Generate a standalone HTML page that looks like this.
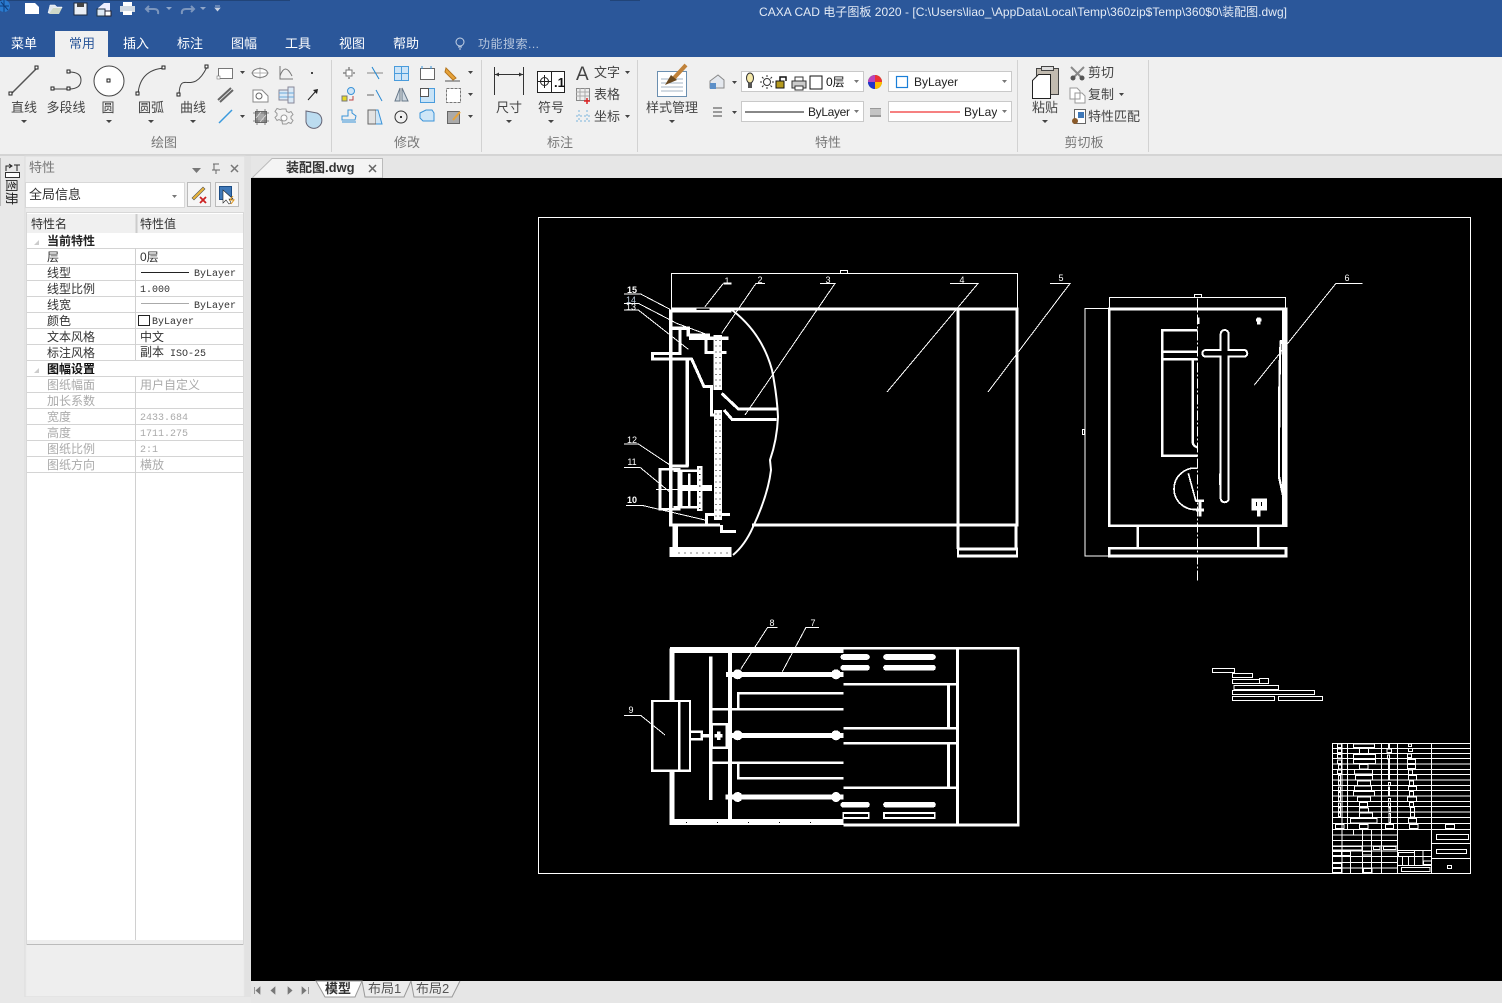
<!DOCTYPE html>
<html><head><meta charset="utf-8"><title>CAXA CAD</title>
<style>
html,body{margin:0;padding:0;background:#e6e6e6;overflow:hidden}
svg{display:block}
text{font-family:"Liberation Sans","Noto Sans CJK SC",sans-serif;font-size:13px;fill:#444}
.tab{fill:#fff;font-size:13px}
.lb{fill:#444;font-size:13px;text-anchor:middle}
.gp{fill:#777;font-size:13px;text-anchor:middle}
.pl{fill:#333;font-size:12px}
.pd{fill:#aaa;font-size:12px}
.mono{font-family:"Liberation Mono","Noto Sans CJK SC",monospace;font-size:10px;fill:#333}
.monod{font-family:"Liberation Mono","Noto Sans CJK SC",monospace;font-size:10px;fill:#aaa}
.n{fill:#fff;font-size:9px;text-anchor:middle}
.i{fill:none;stroke:#555;stroke-width:1}
.b{fill:#cfe6f7;stroke:#3a93d8;stroke-width:1}
.g{fill:#ddd;stroke:#666;stroke-width:1}
.d path,.d rect,.d circle{fill:none;stroke:#fff}
</style></head><body>
<svg width="1502" height="1003" viewBox="0 0 1502 1003" xmlns="http://www.w3.org/2000/svg">
<rect width="1502" height="1003" fill="#e6e6e6"/>
<!-- title -->
<rect width="1502" height="57" fill="#2b579a"/>
<rect x="0" y="0" width="290" height="1" fill="#214478"/><rect x="610" width="30" height="1" fill="#214478"/>
<text x="759" y="16" textLength="528" style="fill:#e4ebf5;font-size:12px">CAXA CAD 电子图板 2020 - [C:\Users\liao_\AppData\Local\Temp\360zip$Temp\360$0\装配图.dwg]</text>
<!-- QAT -->
<circle cx="4" cy="6" r="6" fill="#2a7bd0"/><path d="M0,6H9M4,0V12M1,2L8,10" stroke="#0e3f80"/>
<path d="M25,3H35L39,7V14H25Z" fill="#fff"/>
<path d="M48,13L50,5H55L57,7H62L62,8H53L51,13Z" fill="#dfe6ee" stroke="#fff" stroke-width=".5"/><path d="M49,14L53,8H62L59,14Z" fill="#cfd8c8"/>
<rect x="74" y="3" width="13" height="12" fill="#e9eef5" stroke="#1c2a3f"/><rect x="77" y="3" width="7" height="4" fill="#444"/>
<path d="M98,8L104,3H110V11H98Z" fill="#eef"/><rect x="97" y="9" width="8" height="7" fill="#dce8f5" stroke="#234"/><rect x="105" y="11" width="6" height="5" fill="#fff" stroke="#223"/>
<rect x="123" y="2" width="9" height="4" fill="#fff"/><rect x="120" y="6" width="15" height="6" fill="#cfd8e2"/><rect x="123" y="11" width="9" height="4" fill="#fff"/>
<path d="M149,6L146,9L149,12M147,9H154Q159,9 158,14" fill="none" stroke="#7c96bd" stroke-width="2"/>
<path d="M166,7H172L169,10Z" fill="#8fa6c8"/>
<path d="M191,6L194,9L191,12M193,9H186Q181,9 182,14" fill="none" stroke="#7c96bd" stroke-width="2"/>
<path d="M200,7H206L203,10Z" fill="#8fa6c8"/>
<path d="M215,6H220M215,8H220L217.500,11Z" fill="#c8d2e2" stroke="#c8d2e2" stroke-width=".7"/>
<!-- tabs -->
<rect x="55" y="31" width="53" height="27" fill="#f0f0f0"/>
<text x="11" y="48" class="tab">菜单</text>
<text x="69" y="48" style="fill:#2b579a">常用</text>
<text x="123" y="48" class="tab">插入</text><text x="177" y="48" class="tab">标注</text><text x="231" y="48" class="tab">图幅</text><text x="285" y="48" class="tab">工具</text><text x="339" y="48" class="tab">视图</text><text x="393" y="48" class="tab">帮助</text>
<circle cx="460" cy="42" r="4" fill="none" stroke="#c5d2e5"/><path d="M458,47H462M459,49H461" stroke="#c5d2e5"/>
<text x="478" y="48" textLength="61" style="fill:#b5c5dd;font-size:12px">功能搜索...</text>
<!-- ribbon -->
<rect y="57" width="1502" height="98" fill="#f0f0f0"/>
<rect y="154" width="1502" height="2" fill="#d4d4d4"/>
<path d="M331.500,60V152M481.500,60V152M637.500,60V152M1017.500,60V152M1148.500,60V152" stroke="#d2d2d2"/>
<text x="164" y="147" class="gp">绘图</text><text x="407" y="147" class="gp">修改</text><text x="560" y="147" class="gp">标注</text><text x="828" y="147" class="gp">特性</text><text x="1084" y="147" class="gp">剪切板</text>
<text x="24" y="112" class="lb">直线</text><text x="66" y="112" class="lb">多段线</text><text x="108" y="112" class="lb">圆</text><text x="151" y="112" class="lb">圆弧</text><text x="193" y="112" class="lb">曲线</text>
<text x="509" y="112" class="lb">尺寸</text><text x="551" y="112" class="lb">符号</text><text x="672" y="112" class="lb">样式管理</text><text x="1045" y="112" class="lb">粘贴</text>
<g fill="#444"><path d="M21,120h6l-3,3zM106,120h6l-3,3zM148,120h6l-3,3zM190,120h6l-3,3zM506,120h6l-3,3zM548,120h6l-3,3zM669,120h6l-3,3zM1042,120h6l-3,3z"/>
<path d="M240,71h5l-2.500,3zM240,115h5l-2.500,3zM468,71h5l-2.500,3zM468,93h5l-2.500,3zM468,115h5l-2.500,3zM625,71h5l-2.500,3zM625,115h5l-2.500,3zM732,81h5l-2.500,3zM732,111h5l-2.500,3zM1119,93h5l-2.500,3z"/></g>
<!-- draw big icons -->
<path d="M11,94L37,68" stroke="#555" stroke-width="1.500"/>
<path d="M52,89H69M69,72Q81,72 81,80Q81,89 69,89" fill="none" stroke="#444"/>
<circle cx="109" cy="81" r="15" fill="#fff" stroke="#444"/>
<path d="M138,94Q140,70 164,68" fill="none" stroke="#444"/>
<path d="M179,95C180,68 192,98 207,67" fill="none" stroke="#444"/>
<g fill="#fff" stroke="#222"><rect x="9" y="92" width="3" height="3"/><rect x="35" y="66" width="3" height="3"/><rect x="67" y="70" width="3" height="3"/><rect x="51" y="87" width="3" height="3"/><rect x="67" y="87" width="3" height="3"/><rect x="107" y="79" width="3" height="3"/><rect x="136" y="92" width="3" height="3"/><rect x="162" y="66" width="3" height="3"/><rect x="177" y="93" width="3" height="3"/><rect x="205" y="65" width="3" height="3"/></g>
<!-- draw small -->
<rect x="218.500" y="68.500" width="14" height="10" fill="#fff" stroke="#777"/><rect x="217" y="76" width="3" height="3" fill="#fff" stroke="#777" stroke-width=".6"/>
<ellipse cx="260" cy="73" rx="7.500" ry="4.500" fill="#fff" stroke="#777"/><path d="M260,67V79M251,73H269" stroke="#999" stroke-width=".7"/>
<path d="M280,66V79H293M280,76Q285,62 292,76" fill="none" stroke="#777"/>
<rect x="311" y="72" width="2" height="2" fill="#444"/>
<path d="M218,100L231,88M220,102L233,90" stroke="#666" stroke-width="2"/>
<path d="M253,90H262L268,96V102H253Z" fill="#fff" stroke="#888"/><circle cx="259" cy="96" r="3" fill="none" stroke="#666"/>
<path d="M279,90H288V87H294V103H288V100H279Z" fill="#dbe9f5" stroke="#889"/><path d="M279,93H294M279,97H294" stroke="#6aa9dc"/><path d="M288,87V103" stroke="#889"/>
<path d="M308,100L316,91" stroke="#222"/><path d="M313,90L318,89L317,94Z" fill="#222"/>
<path d="M219,123L232,110" stroke="#3a9ade" stroke-width="1.500"/>
<rect x="255.500" y="111.500" width="11" height="11" fill="#a9a9a9" stroke="#666"/><path d="M253,113H269M253,121H269M257,109V125M265,109V125" stroke="#666" stroke-width=".8"/><path d="M256,118L261,112M260,122L266,115" stroke="#ddd" stroke-width=".8"/>
<path d="M282,109h4l.5,2.500l2.500,1l2,-1l2,3l-2,2v2l2,2l-2,3l-2.500,-1l-2,1.500h-4l-.5,-3l-3,-1.500l-2,1l-2,-3l2,-2v-2l-2,-2l2,-3l3,1z" fill="#f2f2f2" stroke="#999"/><circle cx="284" cy="118" r="3" fill="#fff" stroke="#999"/>
<path d="M306,111L317,113A8,8 0 1 1 306,122Z" fill="#bcdcf0" stroke="#667"/>
<!-- modify icons -->
<path d="M349,67V79M343,73H355" stroke="#555" stroke-dasharray="3 2"/><rect x="346" y="70" width="6" height="6" fill="#fff" stroke="#777"/>
<path d="M367,73H383" stroke="#888"/><path d="M372,67L379,79" stroke="#1f86d0"/>
<rect x="394.500" y="66.500" width="14" height="14" fill="#cde4f7" stroke="#4a9cdc"/><path d="M401.500,66V80M394,73.500H408" stroke="#4a9cdc"/>
<rect x="420.500" y="68.500" width="14" height="11" fill="#fff" stroke="#666"/><path d="M422,66v3M431,66v3" stroke="#3a93d8"/>
<path d="M446,68L456,78L453,80L445,72Z" fill="#e7a33a" stroke="#b5761d"/><path d="M445,81H460" stroke="#555"/>
<rect x="342" y="96" width="5" height="5" fill="#e5d826" stroke="#777"/><circle cx="351" cy="91" r="3.500" fill="#cde4f7" stroke="#3a93d8"/><path d="M349,100h4v-4" fill="none" stroke="#b44"/>
<path d="M367,95H374" stroke="#666"/><path d="M376,90L382,101" stroke="#2a8ad4"/>
<path d="M400,88L395,101H400ZM402,88L408,101H402Z" fill="#cfd8e0" stroke="#678"/>
<rect x="420.500" y="88.500" width="14" height="14" fill="#c8e3f7" stroke="#4a9cdc"/><rect x="420.500" y="88.500" width="8" height="8" fill="#fff" stroke="#555"/>
<rect x="446.500" y="88.500" width="14" height="14" fill="#fff" stroke="#777" stroke-dasharray="3 1"/>
<path d="M342,116H348V110H352V113L356,116L355,120H342ZM342,122H356" fill="none" stroke="#3a93d8"/>
<path d="M368,110H376V124H368Z" fill="#e2e2e2" stroke="#666"/><path d="M376,110H378L382,124H376" fill="#cfe6f7" stroke="#3a93d8"/>
<circle cx="401" cy="117" r="6" fill="none" stroke="#333"/><rect x="400" y="116" width="2" height="2" fill="#333"/>
<path d="M420,113L426,110H432L434,113V121H423L420,118Z" fill="#cfe6f7" stroke="#3a93d8"/>
<rect x="447.500" y="111.500" width="12" height="12" fill="#aaa" stroke="#666"/><path d="M453,120L460,112" stroke="#e7a33a" stroke-width="2"/>
<!-- annotate -->
<path d="M494.500,67V95M523.500,67V95M494,74.500H524" stroke="#333"/><path d="M495,74.500l4,-2v4zM523,74.500l-4,-2v4z" fill="#333"/>
<rect x="537.500" y="71.500" width="27" height="21" fill="#fff" stroke="#222"/><path d="M551.500,71V92" stroke="#222"/><circle cx="544.500" cy="81.500" r="4" fill="none" stroke="#222"/><path d="M538,81.500H551M544.500,75V88" stroke="#222"/>
<text x="554" y="87" style="fill:#111;font-size:13px;font-weight:bold">.1</text>
<text x="576" y="80" style="fill:#444;font-size:19px">A</text>
<text x="594" y="77" style="fill:#444">文字</text><text x="594" y="99" style="fill:#444">表格</text><text x="594" y="121" style="fill:#444">坐标</text>
<rect x="576.500" y="88.500" width="13" height="12" fill="#eee" stroke="#888"/><path d="M576,92H589M580,88V100M585,88V100M576,96H589" stroke="#aaa"/><path d="M584,101H590M587,98V104" stroke="#d22" stroke-width="1.500"/>
<path d="M579,110V122M587,110V122M576,116H590M576,121H590" stroke="#7ab4dc" stroke-dasharray="2 2"/>
<!-- style -->
<rect x="657.500" y="71.500" width="29" height="25" fill="#fff" stroke="#6b8fb0"/><path d="M661,79H683M661,83H683M661,87H683M661,91H683" stroke="#a5b5c5"/>
<path d="M674,78L686,65" stroke="#c0823a" stroke-width="4"/><path d="M665,85L671,75L677,80Z" fill="#6b4a20"/>
<!-- props -->
<path d="M710,81L718,75L724,80V88H710Z" fill="#e4e8ee" stroke="#888"/><rect x="710" y="83" width="6" height="6" fill="#5b8fc8"/>
<path d="M713,108H722M713,112H722M713,116H722" stroke="#444"/>
<g fill="#fff" stroke="#c9c9c9"><rect x="741.500" y="71.500" width="122" height="20"/><rect x="741.500" y="101.500" width="122" height="20"/><rect x="888.500" y="71.500" width="123" height="20"/><rect x="888.500" y="101.500" width="123" height="20"/></g>
<g fill="#777"><path d="M854,80h5l-2.500,3zM854,110h5l-2.500,3zM1002,80h5l-2.500,3zM1002,110h5l-2.500,3z"/></g>
<ellipse cx="750" cy="78" rx="3.500" ry="5" fill="#f6e9a8" stroke="#333"/><rect x="748" y="83" width="4" height="5" fill="#555"/>
<circle cx="767" cy="82" r="3.500" fill="#fff" stroke="#333"/><path d="M767,75v2M767,87v2M760,82h2M772,82h2M762,77l1.500,1.500M772,77l-1.500,1.500M762,87l1.500,-1.500M772,87l-1.500,-1.500" stroke="#333"/>
<rect x="776" y="81" width="8" height="7" fill="#b59a1e" stroke="#111"/><path d="M780,81V77H786V81" fill="none" stroke="#111" stroke-width="1.500"/>
<rect x="792" y="81" width="14" height="7" fill="#ccc" stroke="#333"/><rect x="795" y="77" width="8" height="4" fill="#fff" stroke="#333"/><rect x="795" y="86" width="8" height="4" fill="#fff" stroke="#333"/>
<rect x="810" y="76" width="12" height="13" fill="#fff" stroke="#111"/>
<text x="826" y="86" style="fill:#111;font-size:12px">0层</text>
<circle cx="875" cy="82" r="7" fill="#3ba33b"/><path d="M875,82V75A7,7 0 0 1 882,82Z" fill="#e33"/><path d="M875,82H882A7,7 0 0 1 875,89Z" fill="#fb0"/><path d="M875,82V89A7,7 0 0 1 868,82Z" fill="#23c"/><path d="M875,82H868A7,7 0 0 1 875,75Z" fill="#b4b"/>
<rect x="896.500" y="76.500" width="11" height="11" fill="#fff" stroke="#1a7fd8" stroke-width="1.200"/>
<text x="914" y="86" textLength="44" style="fill:#222;font-size:12px">ByLayer</text>
<path d="M745,112H804" stroke="#111"/><text x="808" y="116" textLength="42" style="fill:#222;font-size:12px">ByLayer</text>
<rect x="870" y="108" width="11" height="9" fill="#999"/><path d="M870,110H881M870,112H881M870,114H881" stroke="#f0f0f0"/>
<path d="M890,112H960" stroke="#e00"/><svg x="964" y="102" width="33" height="20"><text x="0" y="14" style="fill:#222;font-size:12px">ByLayer</text></svg>
<!-- clipboard -->
<rect x="1036.500" y="68.500" width="22" height="26" fill="#c2bbb0" stroke="#444"/><rect x="1041.500" y="66.500" width="12" height="4" fill="#ddd" stroke="#444"/><path d="M1032.500,80.500L1038.500,74.500H1050.500V98.500H1032.500Z" fill="#fff" stroke="#222"/>
<path d="M1071,67L1083,79M1084,67L1072,79" stroke="#8a8a8a" stroke-width="2"/><circle cx="1073" cy="78" r="2.500" fill="#555"/><circle cx="1082" cy="78" r="2.500" fill="#555"/>
<path d="M1070,88H1077L1080,91V99H1070ZM1075,93H1082L1085,96V103H1075Z" fill="#fff" stroke="#999"/>
<rect x="1074.500" y="109.500" width="11" height="14" fill="#fff" stroke="#666"/><rect x="1078" y="112" width="6" height="6" fill="#3f78b8"/><circle cx="1075" cy="121" r="3" fill="#8a5a2a"/>
<text x="1088" y="77">剪切</text><text x="1088" y="99">复制</text><text x="1088" y="121">特性匹配</text>
<!-- left strip -->
<rect x="0" y="156" width="24" height="847" fill="#e8e8e8"/>
<rect x="0" y="158" width="1" height="48" fill="#bbb"/>
<rect x="5.500" y="172.500" width="14" height="5" fill="#fff" stroke="#333"/><path d="M6,171V166H11M9,164L12,166L9,168M14,165H20M17,165V171" fill="none" stroke="#222"/>
<text x="0" y="0" transform="translate(7,179) rotate(90)" style="fill:#222;font-size:13px">图册</text>
<!-- panel -->
<rect x="25" y="156" width="220" height="841" fill="#ececec" stroke="#ddd"/>
<text x="29" y="172" style="fill:#777;font-size:13px">特性</text>
<path d="M192,168h9l-4.500,5z" fill="#777"/>
<path d="M213,164H219M214,164V170M212,170H220M216,170V174" fill="none" stroke="#666"/>
<path d="M231,165L238,172M238,165L231,172" stroke="#777" stroke-width="1.500"/>
<rect x="25.500" y="182.500" width="159" height="25" fill="#fff" stroke="#d8d8d8"/>
<text x="29" y="199" style="fill:#333;font-size:13px">全局信息</text>
<path d="M172,195h5l-2.500,3z" fill="#777"/>
<rect x="187.500" y="182.500" width="23" height="24" fill="#f6f6f6" stroke="#bbb"/>
<path d="M192,198L203,187L205,189L194,200Z" fill="#e9b53c" stroke="#555" stroke-width=".6"/><path d="M200,197L206,203M206,197L200,203" stroke="#c22" stroke-width="1.800"/>
<rect x="215.500" y="182.500" width="23" height="24" fill="#f6f6f6" stroke="#bbb"/>
<rect x="219.500" y="186.500" width="12" height="13" fill="#3f78b8" stroke="#1c4d85"/><path d="M223,190V203L226,200L229,204L231,203L229,199L233,199Z" fill="#fff" stroke="#222" stroke-width=".6"/><path d="M233,196L230,200H234L231,204" fill="none" stroke="#e39a1d"/>
<!-- grid -->
<rect x="26.500" y="212.500" width="217" height="732" fill="#fff" stroke="#d8d8d8"/>
<rect x="27" y="214" width="216" height="19" fill="#f0f0f0"/>
<path d="M136.500,214V233" stroke="#ccc" stroke-width="2"/>
<text x="31" y="228" class="pl">特性名</text><text x="140" y="228" class="pl">特性值</text>
<path d="M27,248.500H243M27,264.500H243M27,280.500H243M27,296.500H243M27,312.500H243M27,328.500H243M27,344.500H243M27,360.500H243M27,376.500H243M27,392.500H243M27,408.500H243M27,424.500H243M27,440.500H243M27,456.500H243M27,472.500H243" stroke="#d4d4d4"/>
<path d="M135.500,248V360M135.500,376V940" stroke="#d0d0d0"/>
<path d="M39,240v5h-5zM39,368v5h-5z" fill="#ccc"/>
<text x="47" y="245" style="fill:#222;font-size:12px;font-weight:bold">当前特性</text><text x="47" y="373" style="fill:#111;font-size:12px;font-weight:bold">图幅设置</text>
<text x="47" y="261" class="pl">层</text><text x="47" y="277" class="pl">线型</text><text x="47" y="293" class="pl">线型比例</text><text x="47" y="309" class="pl">线宽</text><text x="47" y="325" class="pl">颜色</text><text x="47" y="341" class="pl">文本风格</text><text x="47" y="357" class="pl">标注风格</text>
<text x="47" y="389" class="pd">图纸幅面</text><text x="47" y="405" class="pd">加长系数</text><text x="47" y="421" class="pd">宽度</text><text x="47" y="437" class="pd">高度</text><text x="47" y="453" class="pd">图纸比例</text><text x="47" y="469" class="pd">图纸方向</text>
<text x="140" y="261" class="pl">0层</text>
<path d="M141,272.500H189" stroke="#222"/><text x="194" y="276" class="mono">ByLayer</text>
<text x="140" y="292" class="mono">1.000</text>
<path d="M141,303.500H189" stroke="#aaa"/><text x="194" y="308" class="mono">ByLayer</text>
<rect x="138.500" y="315.500" width="11" height="10" fill="#fff" stroke="#222"/><text x="152" y="324" class="mono">ByLayer</text>
<text x="140" y="341" class="pl">中文</text>
<text x="140" y="356" class="mono"><tspan style="font-size:12px">副本</tspan> ISO-25</text>
<text x="140" y="389" class="pd">用户自定义</text>
<text x="140" y="420" class="monod">2433.684</text><text x="140" y="436" class="monod">1711.275</text><text x="140" y="452" class="monod">2:1</text>
<text x="140" y="469" class="pd">横放</text>
<rect x="27" y="940" width="216" height="56" fill="#eeeeee"/>
<rect x="27" y="944" width="216" height="1" fill="#bbb"/>
<rect x="246" y="156" width="5" height="841" fill="#e2e2e2"/>
<rect x="0" y="997" width="1502" height="6" fill="#e8e8e8"/>
<rect x="251" y="981" width="1251" height="22" fill="#e6e6e6"/>
<!-- doc tab -->
<path d="M252,178L272,158.500H382.500V178Z" fill="#f4f4f4" stroke="#bbb"/>
<text x="286" y="172" style="fill:#333;font-weight:bold;font-size:13px">装配图.dwg</text>
<path d="M369,165L376,172M376,165L369,172" stroke="#666" stroke-width="1.500"/>
<!-- canvas -->
<rect x="251" y="178" width="1251" height="803" fill="#000"/>
<!-- bottom tabs -->
<path d="M254.500,987v7M260,987l-4,3.500l4,3.500zM275,987l-4,3.500l4,3.500zM288,987l4,3.500l-4,3.500zM302,987l4,3.500l-4,3.500zM308.500,987v7" fill="#777" stroke="#777" stroke-width=".7"/>
<path d="M316,981L325,997H355L362,981Z" fill="#fff" stroke="#999"/>
<path d="M362,981L365,997H404L411,981M411,981L414,997H452L460,981" fill="#ececec" stroke="#999"/>
<text x="325" y="993" style="fill:#333;font-weight:bold;font-size:13px">模型</text>
<text x="368" y="993" style="fill:#555;font-size:13px">布局1</text><text x="416" y="993" style="fill:#555;font-size:13px">布局2</text>
<!-- drawing -->
<g class="d" shape-rendering="crispEdges">
<rect x="538.500" y="217.500" width="932" height="656" stroke-width="1"/>
<path d="M671.500,308V273.500H1017.500V308" stroke-width="1"/><rect x="840.500" y="270.500" width="7" height="3" stroke-width="1"/>
<path d="M671,309H1017V525H752M958,309V525" stroke-width="3"/>
<path d="M958,525V549M1016,525V549M957,549H1018M957,556H1018" stroke-width="3"/>
<path d="M958,549V556M1017,549V556" stroke-width="2"/>
</g>
<path d="M732,310Q762,333 772,370Q777,395 778,417Q777,440 770,460L771,470Q768,495 753,527Q745,545 733,555" fill="none" stroke="#fff" stroke-width="2"/>
<g class="d" transform="translate(610,260) scale(.33333)" shape-rendering="crispEdges">
<path d="M182,148V800" stroke-width="10"/>
<path d="M182,205H235V225H300M237,235H355" stroke-width="10"/>
<path d="M210,210V280H128V297H245L282,380H305V465H330" stroke-width="9"/>
<path d="M232,300V620M180,618H236" stroke-width="10"/>
<path d="M288,240V278H350" stroke-width="9"/>
<path d="M335,400L385,447H500M342,450L366,478H500" stroke-width="9"/>
<path d="M323,225V390M324,450V780" stroke-width="25"/>
<rect x="150" y="628" width="57" height="120" stroke-width="8"/>
<path d="M213,628V745M190,632H268M190,742H268M238,640V740" stroke-width="8"/>
<path d="M269,618V753" stroke-width="17"/>
<path d="M207,684H306" stroke-width="18"/>
<path d="M290,795V763H360M180,795H330M335,795V815H378" stroke-width="9"/>
<path d="M196,795V875" stroke-width="16"/>
<path d="M178,876H364" stroke-width="30"/>
<path d="M185,150H365" stroke-width="14"/>
<path d="M318,240V385M330,240V385M318,460V775M330,460V775M269,625V750" style="stroke:#000;stroke-dasharray:3 14" stroke-width="4"/>
<path d="M205,879H360" style="stroke:#000;stroke-dasharray:4 14" stroke-width="4"/>
<path d="M260,148H298" style="stroke:#000" stroke-width="4"/>
<path d="M42,102H92L180,148M42,130H85L200,190L295,225M42,150H85L235,268M42,552H85L180,615M42,622H90L178,695M48,737H100L285,780M285,140L340,70M438,70H465M438,70L335,220" stroke-width="3"/>
<path d="M340,70H365" stroke-width="6"/>
<path d="M138,688H208" stroke-width="3"/>
</g>
<path d="M820,283.500H835L745,415M950,283.500H978L887,392M1050,283.500H1070L988,392" fill="none" stroke="#fff" stroke-width="1" shape-rendering="crispEdges"/>
<g>
<text x="727" y="284" class="n">1</text><text x="760" y="283" class="n">2</text><text x="828" y="283" class="n">3</text><text x="962" y="283" class="n">4</text><text x="1061" y="281" class="n">5</text><text x="1347" y="281" class="n">6</text>
<text x="632" y="293" class="n" style="font-weight:bold">15</text><text x="631" y="303" class="n" style="fill:#bcd">14</text><text x="631" y="310" class="n">13</text>
<text x="632" y="443" class="n">12</text><text x="632" y="465" class="n">11</text><text x="632" y="503" class="n" style="font-weight:bold">10</text>
<text x="772" y="626" class="n">8</text><text x="813" y="626" class="n">7</text><text x="631" y="713" class="n">9</text>
</g>
<!-- side view -->
<g class="d" transform="translate(1070,260) scale(.33333)" shape-rendering="crispEdges">
<rect x="118" y="147" width="530" height="650" stroke-width="8"/>
<path d="M118,143V113H647V143" stroke-width="3"/><rect x="373" y="103" width="22" height="10" stroke-width="3"/>
<path d="M117,145H45V888H117" stroke-width="3"/><rect x="37" y="508" width="7" height="15" stroke-width="3"/>
<path d="M382,211H277V587H382M277,275H382M277,298H382M368,300V545Q368,558 382,562" stroke-width="7"/>
<path d="M382,625A62,62 0 1 0 382,748M355,640L378,725" stroke-width="5"/>
<path d="M452,270V222A12,12 0 0 1 476,222V270H522A10,10 0 0 1 522,290H476V715A12,12 0 0 1 452,715V290H407A10,10 0 0 1 407,270Z" stroke-width="6"/>
<path d="M449,640V675" stroke-width="5"/>
<path d="M633,240Q627,280 627,650L640,710" stroke-width="7"/>
<path d="M642,147V797" stroke-width="11"/>
<path d="M203,797V862M565,797V862" stroke-width="8"/>
<path d="M565,865H648" stroke-width="7"/>
<rect x="118" y="865" width="530" height="23" stroke-width="8"/>
<path d="M878,70H798L553,375" stroke-width="3"/>
<path d="M382,115V965" stroke-width="3" style="stroke:#fff;stroke-dasharray:30 6 6 6"/>
<path d="M385,172V192" stroke-width="8"/>
<path d="M378,722H402M378,750H402M390,722V770" stroke-width="8"/>
<path d="M558,180H574M566,172V194" stroke-width="10"/>
<rect x="545" y="716" width="45" height="34" style="fill:#fff" stroke-width="2"/>
<path d="M566,748V770" stroke-width="10"/>
<path d="M560,726V738M574,726V738" style="stroke:#000" stroke-width="3"/>
</g>
<!-- top view -->
<g class="d" transform="translate(620,610) scale(.33333)" shape-rendering="crispEdges">
<path d="M670,115H1195V645H670" stroke-width="8"/>
<path d="M150,120H670M150,636H670" stroke-width="17"/>
<path d="M156,115V272M156,482V645" stroke-width="16"/>
<path d="M1012,115V645" stroke-width="9"/>
<path d="M330,125V630" stroke-width="11"/>
<path d="M272,140V570" stroke-width="11"/>
<path d="M318,193H670M335,376H670M316,561H670" stroke-width="15"/>
<circle cx="353" cy="193" r="9" style="fill:#fff" stroke-width="12"/><circle cx="648" cy="193" r="9" style="fill:#fff" stroke-width="12"/>
<circle cx="353" cy="376" r="9" style="fill:#fff" stroke-width="12"/><circle cx="648" cy="376" r="9" style="fill:#fff" stroke-width="12"/>
<circle cx="353" cy="561" r="9" style="fill:#fff" stroke-width="12"/><circle cx="648" cy="561" r="9" style="fill:#fff" stroke-width="12"/>
<path d="M670,141H741M798,141H939M670,173H741M798,173H939M670,584H741M798,584H939" stroke-width="17" stroke-linecap="round"/>
<rect x="670" y="609" width="76" height="15" stroke-width="5"/><rect x="792" y="609" width="152" height="15" stroke-width="5"/>
<path d="M670,223H1010M670,355H1010M670,400H1010M670,533H1010" stroke-width="8"/>
<path d="M985,225V355M985,400V533" stroke-width="9"/>
<path d="M670,250H355V298M275,298H670M275,458H670M355,458V505H670" stroke-width="8"/>
<rect x="275" y="343" width="45" height="70" stroke-width="8"/>
<path d="M284,377H308M296,365V390" stroke-width="10"/>
<rect x="97" y="273" width="113" height="209" stroke-width="7"/>
<path d="M178,273V482" stroke-width="8"/>
<path d="M210,365H245V388H210" stroke-width="7"/><path d="M245,377H275" stroke-width="11"/>
<path d="M12,316H62L135,375M473,52H443L362,178M597,52H558L487,185" stroke-width="3"/>
<path d="M198,637H610" style="stroke:#000;stroke-dasharray:3 90" stroke-width="3"/>
</g>
<!-- small parts list -->
<g class="d" transform="translate(1200,660) scale(.33333)" shape-rendering="crispEdges">
<rect x="37" y="25" width="66" height="12" stroke-width="3"/><rect x="97" y="41" width="61" height="12" stroke-width="3"/><rect x="97" y="58" width="82" height="12" stroke-width="3"/><rect x="178" y="55" width="28" height="16" stroke-width="3"/><rect x="102" y="76" width="134" height="13" stroke-width="3"/><rect x="97" y="91" width="247" height="13" stroke-width="3"/><rect x="97" y="109" width="127" height="13" stroke-width="3"/><rect x="235" y="109" width="133" height="13" stroke-width="3"/>
</g>
<!-- title block -->
<g class="d" transform="translate(1320,735) scale(.33333)" shape-rendering="crispEdges">
<path d="M36,25H450M36,41H450M36,56H450M36,71H450M36,87H450M36,103H450M36,119H450M36,135H450M36,151H450M36,167H450M36,183H450M36,199H450M36,215H450M36,231H450M36,247H450M36,265H450M36,283H450M36,300H232M36,316H232M36,333H232M36,348H232M36,365H232M36,383H232M36,399H232M36,415H450M334,325H450M334,370H450M232,346H334M232,365H334M232,391H334" stroke-width="3"/>
<path d="M37,25V415M66,25V415M82,25V283M100,283V300M92,350V415M127,283V415M155,283V415M184,25V415M232,25V415M334,25V415M248,365V391M266,365V391M283,346V391M309,346V391" stroke-width="3"/>
<g stroke-width="3">
<rect x="52" y="27" width="12" height="11"/><rect x="52" y="42" width="12" height="11"/><rect x="52" y="58" width="12" height="11"/><rect x="52" y="75" width="12" height="11"/><rect x="55" y="90" width="10" height="12"/><rect x="52" y="105" width="12" height="11"/><rect x="55" y="122" width="6" height="13"/><rect x="55" y="138" width="6" height="12"/><rect x="55" y="156" width="6" height="13"/><rect x="55" y="172" width="6" height="11"/><rect x="55" y="186" width="6" height="12"/><rect x="55" y="204" width="6" height="12"/><rect x="55" y="219" width="6" height="11"/><rect x="55" y="234" width="6" height="11"/>
<rect x="100" y="27" width="64" height="11"/><rect x="118" y="41" width="28" height="14"/><rect x="100" y="58" width="66" height="13"/><rect x="100" y="73" width="66" height="13"/><rect x="118" y="89" width="26" height="13"/><rect x="103" y="104" width="54" height="13"/><rect x="106" y="122" width="52" height="13"/><rect x="112" y="138" width="40" height="13"/><rect x="103" y="153" width="52" height="14"/><rect x="100" y="169" width="64" height="14"/><rect x="112" y="186" width="40" height="14"/><rect x="118" y="202" width="24" height="14"/><rect x="118" y="219" width="28" height="13"/><rect x="118" y="234" width="40" height="14"/><rect x="91" y="250" width="80" height="14"/>
<rect x="205" y="27" width="4" height="11"/><rect x="201" y="42" width="14" height="11"/><rect x="202" y="60" width="7" height="12"/><rect x="205" y="75" width="3" height="40"/><rect x="205" y="122" width="3" height="13"/><rect x="205" y="142" width="7" height="10"/><rect x="205" y="156" width="3" height="26"/><rect x="205" y="190" width="7" height="10"/><rect x="205" y="204" width="7" height="12"/><rect x="207" y="219" width="4" height="11"/><rect x="207" y="236" width="4" height="26"/>
<rect x="265" y="27" width="10" height="8"/><rect x="265" y="41" width="13" height="9"/><rect x="262" y="57" width="13" height="10"/><rect x="262" y="74" width="24" height="12"/><rect x="262" y="88" width="24" height="13"/><rect x="265" y="105" width="13" height="14"/><rect x="265" y="122" width="24" height="13"/><rect x="268" y="138" width="13" height="14"/><rect x="265" y="154" width="24" height="13"/><rect x="268" y="170" width="13" height="14"/><rect x="262" y="186" width="27" height="14"/><rect x="268" y="202" width="13" height="14"/><rect x="271" y="218" width="13" height="14"/><rect x="271" y="232" width="13" height="14"/><rect x="265" y="250" width="24" height="14"/>
<rect x="46" y="268" width="26" height="13"/><rect x="118" y="268" width="26" height="13"/><rect x="196" y="268" width="24" height="13"/><rect x="268" y="268" width="26" height="13"/><rect x="376" y="268" width="28" height="13"/>
<rect x="349" y="298" width="97" height="16"/><rect x="349" y="343" width="91" height="13"/><rect x="382" y="391" width="13" height="10"/><rect x="244" y="397" width="86" height="13"/><rect x="235" y="352" width="48" height="13"/><rect x="310" y="378" width="24" height="10"/>
<rect x="38" y="335" width="28" height="10"/><rect x="66" y="335" width="60" height="10"/><rect x="160" y="334" width="20" height="10"/><rect x="190" y="334" width="38" height="10"/><rect x="38" y="350" width="26" height="11"/><rect x="66" y="350" width="26" height="11"/><rect x="127" y="350" width="28" height="10"/><rect x="38" y="385" width="26" height="13"/><rect x="38" y="400" width="26" height="13"/><rect x="130" y="400" width="26" height="13"/>
</g>
</g>
</svg>
</body></html>
